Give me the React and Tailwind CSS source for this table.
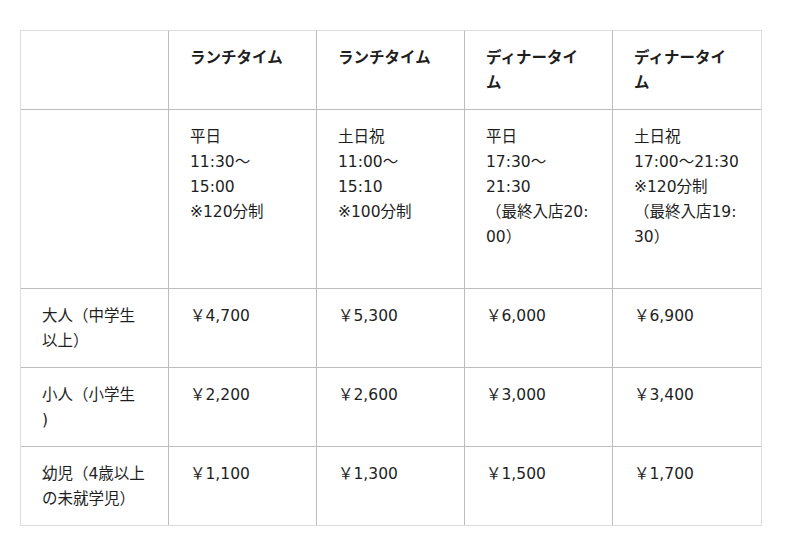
import React from 'react';

// 料金表のデータ（行ごと、セルごとに表示行を配列で持つ）
const rows = [
  {
    h: 'h-[79px]',
    head: true,
    cells: [
      [],
      ['ランチタイム'],
      ['ランチタイム'],
      ['ディナータイ', 'ム'],
      ['ディナータイ', 'ム'],
    ],
  },
  {
    h: 'h-[179px]',
    cells: [
      [],
      ['平日', '11:30〜', '15:00', '※120分制'],
      ['土日祝', '11:00〜', '15:10', '※100分制'],
      ['平日', '17:30〜', '21:30', '（最終入店20:', '00）'],
      ['土日祝', '17:00〜21:30', '※120分制', '（最終入店19:', '30）'],
    ],
  },
  {
    h: 'h-[79px]',
    cells: [['大人（中学生', '以上）'], ['￥4,700'], ['￥5,300'], ['￥6,000'], ['￥6,900']],
  },
  {
    h: 'h-[79px]',
    cells: [['小人（小学生', ')'], ['￥2,200'], ['￥2,600'], ['￥3,000'], ['￥3,400']],
  },
  {
    h: 'h-[78px]',
    last: true,
    cells: [['幼児（4歳以上', 'の未就学児）'], ['￥1,100'], ['￥1,300'], ['￥1,500'], ['￥1,700']],
  },
];

const App = () => {
  return (
    <div className="min-h-[556px] bg-white pl-[20px] pt-[30px] font-['DejaVu_Sans','Noto_Sans_CJK_JP',sans-serif] text-[15.5px] leading-[25px] text-[#1e1e1e]">
      <div className="w-[742px] border border-[#dddddd]">
        {rows.map((row, ri) => (
          <div key={ri} className="flex">
            {row.cells.map((lines, ci) => (
              <div
                key={ci}
                className={[
                  'w-[148px] pl-[21px] pt-[15px] whitespace-nowrap',
                  row.h,
                  ci < 4 ? 'border-r border-[#bdbdbd]' : '',
                  row.last ? '' : 'border-b border-b-[#bdbdbd]',
                  row.head ? 'font-bold' : '',
                ].join(' ')}
              >
                {lines.map((l, li) => (
                  <div key={li}>{l}</div>
                ))}
              </div>
            ))}
          </div>
        ))}
      </div>
    </div>
  );
};

export default App;
